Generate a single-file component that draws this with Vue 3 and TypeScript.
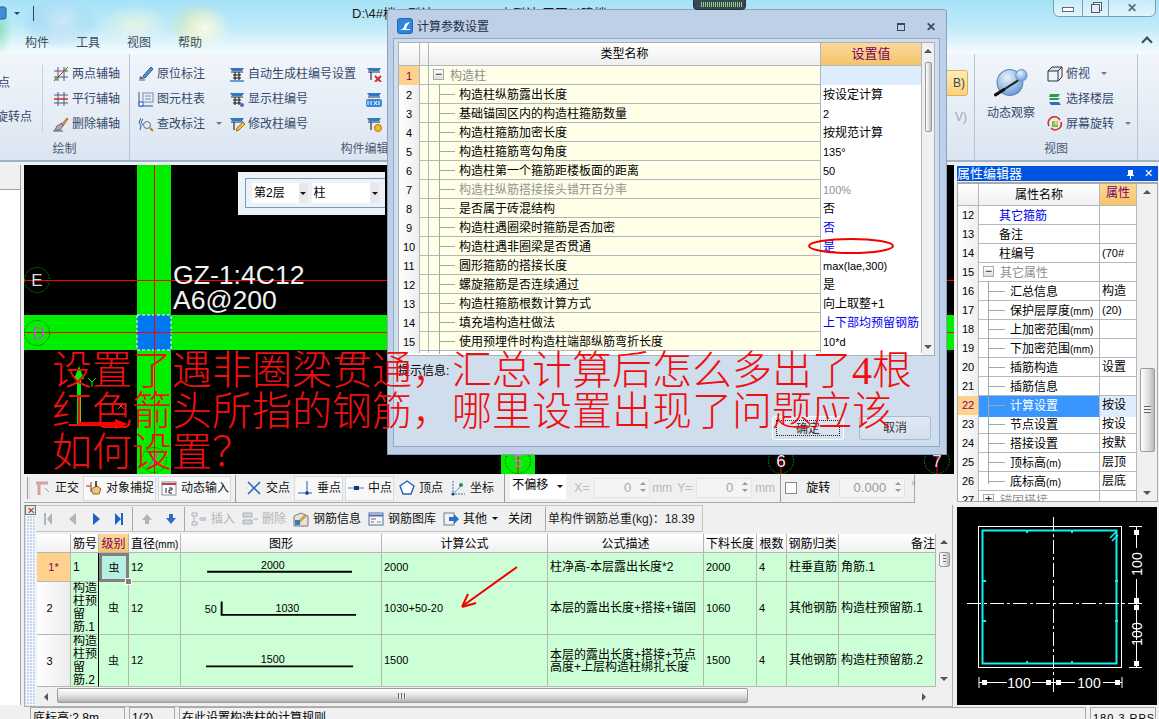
<template>
  <div class="app">
    <header class="top">
      <div class="quick">
        <svg class="qa" viewBox="0 0 8 14"><rect x="-6" y="1" width="12" height="12" rx="2" fill="#3f8fd6" stroke="#245f98" /></svg>
        <i class="caret qa-caret"></i>
        <i class="qa-line"></i>
      </div>
      <div class="doc-title">D:\4#楼 - 型计 100.07/0 - 土型计 三四以建楼</div>
      <div class="tabs">
        <span v-for="t in tabs" :key="t">{{ t }}</span>
      </div>
      <div class="chevron"></div>
      <div class="winbtns">
        <span class="wb wb-min"><i></i></span>
        <span class="wb wb-max"><i></i></span>
        <span class="wb wb-close">✕</span>
      </div>
    </header>

    <section class="ribbon">
      <div class="group g-draw">
        <div class="g-body">
          <div class="cut-col"><div class="cut-a">点</div><div class="cut-b">旋转点</div></div>
          <div class="col col-axis">
            <div v-for="b in axisBtns" :key="b.t" class="rb"><svg viewBox="0 0 16 16" v-html="icons[b.i]"></svg>{{ b.t }}</div>
          </div>
        </div>
        <div class="g-label">绘制</div>
      </div>
      <div class="group g-edit">
        <div class="g-body">
          <div class="col col-a">
            <div v-for="b in editA" :key="b.t" class="rb"><svg viewBox="0 0 16 16" v-html="icons[b.i]"></svg>{{ b.t }}<i v-if="b.c" class="caret"></i></div>
          </div>
          <div class="col col-b">
            <div v-for="b in editB" :key="b.t" class="rb"><svg viewBox="0 0 16 16" v-html="icons[b.i]"></svg>{{ b.t }}</div>
          </div>
          <div class="col">
            <div v-for="b in editC" :key="b" class="rb"><svg viewBox="0 0 16 16" v-html="icons[b]"></svg></div>
          </div>
        </div>
        <div class="g-label">构件编辑</div>
      </div>
      <div class="group g-hidden">
        <div class="hid-col">
          <div class="hid-btn">B)</div>
          <div class="hid-v">V)</div>
        </div>
      </div>
      <div class="group g-view">
        <div class="g-body">
          <div class="orb-col">
            <svg viewBox="0 0 34 30" class="orb">
              <defs>
                <radialGradient id="orbg" cx="0.4" cy="0.3" r="0.8"><stop offset="0" stop-color="#e8f3fd" /><stop offset="1" stop-color="#5b93d0" /></radialGradient>
              </defs>
              <circle cx="16" cy="15" r="12.5" fill="url(#orbg)" stroke="#5a84b4" />
              <circle cx="27" cy="8" r="5.5" fill="url(#orbg)" stroke="#6c96c2" />
              <path d="M2 27 L24 13" stroke="#222" stroke-width="2" />
              <path d="M2 27 L10 22" stroke="#111" stroke-width="3" stroke-linecap="round" />
            </svg>
            <span>动态观察</span>
          </div>
          <div class="col col-view">
            <div v-for="b in viewBtns" :key="b.t" class="rb"><svg viewBox="0 0 16 16" v-html="icons[b.i]"></svg>{{ b.t }}<i v-if="b.c" class="caret"></i></div>
          </div>
        </div>
        <div class="g-label">视图</div>
      </div>
    </section>

    <main class="work">
      <aside class="side"><div class="side-head"></div></aside>

      <div class="center">
        <div class="canvas">
          <svg class="cad" viewBox="24 165 930 309">
            <rect x="137" y="165" width="34" height="309" fill="#00ee00" />
            <rect x="24" y="315" width="930" height="35" fill="#00ee00" />
            <rect x="501" y="454" width="34" height="20" fill="#00ee00" />
            <rect x="137" y="315" width="34" height="35" fill="#0078f0" stroke="#fff" stroke-dasharray="3 2" />
            <path d="M154.5 165V474M24 280.5H954M24 332.5H954M518 454V474M781 454V474M937 454V474" stroke="#ff0000" />
            <g fill="none" stroke="#0a7a0a" stroke-dasharray="2 1">
              <circle cx="37" cy="280" r="12.5" /><circle cx="37" cy="333" r="12.5" />
              <circle cx="154" cy="460" r="12.5" /><circle cx="518" cy="461" r="12.5" />
              <circle cx="781" cy="461" r="12.5" /><circle cx="937" cy="461" r="12.5" />
            </g>
            <g class="axis-t">
              <text x="37" y="286" fill="#ddd">E</text><text x="39" y="339" fill="#b060c0">D</text>
              <text x="154" y="466" fill="#b060c0">X</text><text x="518" y="467" fill="#c080c0">5</text>
              <text x="781" y="467" fill="#eee">6</text><text x="937" y="467" fill="#ddd">7</text>
            </g>
            <text class="gz" x="173" y="284">GZ-1:4C12</text>
            <text class="gz" x="173" y="309">A6@200</text>
            <path d="M79 424V374" stroke="#00ee00" stroke-width="4" />
            <path d="M79 366l-5 13h10z" fill="#00ee00" />
            <path d="M79 424H118" stroke="#ff0000" stroke-width="4" />
            <path d="M128 424l-13-5v10z" fill="#ff0000" />
            <path d="M88 378l4 4 4-4M92 382v5" stroke="#00ee00" fill="none" />
            <path d="M118 403l6 6M124 403l-6 6" stroke="#ff4040" fill="none" />
          </svg>
          <div class="floor">
            <div class="floor-in">
              <div class="combo floor-a">第2层<b><i class="caret dark"></i></b></div>
              <div class="combo floor-b">柱<b><i class="caret dark"></i></b></div>
            </div>
          </div>
        </div>

        <div class="snapbar">
          <i class="grip"></i>
          <div v-for="s in snaps" :key="s.t" class="snap" :class="{ framed: s.f, sep: s.s }"><svg viewBox="0 0 16 16" v-html="icons[s.i]"></svg>{{ s.t }}</div>
          <div class="offset"><span>不偏移</span><i class="caret dark"></i></div>
          <div class="spin-row">
            <span class="lbl-x">X=</span><div class="spin">0<em></em></div><span class="lbl-mm">mm</span>
            <span class="lbl-y">Y=</span><div class="spin">0<em></em></div><span class="lbl-mm2">mm</span>
          </div>
          <label class="rot"><i class="chk"></i><span>旋转</span></label>
          <div class="spin s3">0.000<em></em></div><span class="deg">°</span>
        </div>

        <div class="rebar">
          <div class="handle"><i>✕</i></div>
          <div class="rebar-main">
            <div class="rtools">
              <svg viewBox="0 0 10 14" class="nav"><path d="M1 1h2v12H1zM9 1v12L4 7z" fill="#aeb4bb" /></svg>
              <svg viewBox="0 0 10 14" class="nav n2"><path d="M9 1v12L2 7z" fill="#aeb4bb" /></svg>
              <svg viewBox="0 0 10 14" class="nav n3"><path d="M2 1v12l7-6z" fill="#1d62c8" /></svg>
              <svg viewBox="0 0 10 14" class="nav n4"><path d="M1 1v12l6-6zM7 1h2v12H7z" fill="#1d62c8" /></svg>
              <i class="rsep s1"></i>
              <svg viewBox="0 0 12 12" class="nav n5"><path d="M6 1l5 6H8v4H4V7H1z" fill="#aeb4bb" /></svg>
              <svg viewBox="0 0 12 12" class="nav n6"><path d="M6 11L1 5h3V1h4v4h3z" fill="#2a6cc8" /></svg>
              <i class="rsep s2"></i>
              <div v-for="r in rTools" :key="r.t" class="rtool" :class="{ off: r.off }"><svg viewBox="0 0 16 16" v-html="icons[r.i]"></svg>{{ r.t }}</div>
              <i class="caret dark rcaret"></i>
              <span class="close-t">关闭</span>
              <i class="rsep s3"></i>
              <span class="total">单构件钢筋总重(kg)：18.39</span>
            </div>
            <div class="rgrid-wrap">
              <div class="rgrid">
                <div v-for="(h, i) in rHead" :key="h + i" class="rh" :class="{ act: i === 2, left: i === 1 || i === 3, end: i === 10 }">{{ base(h) }}<small>{{ unit(h) }}</small></div>
                <template v-for="(r, i) in rRows" :key="r.no">
                  <div class="rc-no" :class="{ cur: i === 0 }">{{ i === 0 ? '1*' : r.no }}</div>
                  <div class="rc-tx lab" :class="{ tight: i > 0 }">{{ r.lab }}</div>
                  <div class="rc-lv" :class="{ sel: i === 0 }">虫</div>
                  <div class="rc-tx num">12</div>
                  <div class="rc-shape">
                    <svg v-if="i === 0" viewBox="0 0 201 29"><text x="92" y="17">2000</text><path d="M24 19.5H174" stroke="#000" stroke-width="2" /></svg>
                    <svg v-else-if="i === 1" viewBox="0 0 201 53"><text x="29" y="32">50</text><text x="107" y="31">1030</text><path d="M40 20V33.5H177" stroke="#000" stroke-width="2" fill="none" /></svg>
                    <svg v-else viewBox="0 0 201 52"><text x="92" y="29">1500</text><path d="M24 32H174" stroke="#000" stroke-width="2" /></svg>
                  </div>
                  <div class="rc-tx num">{{ r.calc }}</div>
                  <div class="rc-tx desc">{{ r.desc }}</div>
                  <div class="rc-tx num">{{ r.len }}</div>
                  <div class="rc-tx num">4</div>
                  <div class="rc-tx">{{ r.kind }}</div>
                  <div class="rc-tx">{{ r.note }}</div>
                </template>
              </div>
              <div class="vs rvs"><i class="up"></i><b class="thumb"></b><i class="down"></i></div>
            </div>
            <div class="hs">
              <i class="hl"></i><b class="hthumb"></b><i class="hr"></i>
            </div>
          </div>
        </div>
      </div>

      <aside class="right">
        <div class="prop-title"><span>属性编辑器</span>
          <svg class="pin" viewBox="0 0 9 10"><path d="M2 1h5v5h1v1H5v3H4V7H1V6h1z" fill="#fff" /></svg>
          <u>✕</u>
        </div>
        <div class="prop">
          <div class="prop-table">
            <div class="prow head"><div></div><div class="pname-h">属性名称</div><div class="pval-h">属性</div></div>
            <div v-for="p in props" :key="p.n" class="prow" :class="{ picked: p.n === 22 }">
              <div class="pno">{{ p.n }}</div>
              <div class="pname" :class="p.c">{{ base(p.t) }}<small>{{ unit(p.t) }}</small></div>
              <div class="pval" :class="latin(p.v)">{{ p.v }}</div>
            </div>
          </div>
          <div class="vs pvs"><i class="up"></i><b class="thumb"></b><i class="down"></i></div>
        </div>
        <svg class="section" viewBox="957 507 200 198">
          <rect x="957" y="507" width="200" height="198" fill="#000" />
          <rect x="978.5" y="526.5" width="143" height="141" fill="none" stroke="#fff" />
          <rect x="982.5" y="530.5" width="134" height="133" fill="none" stroke="#10f0f0" stroke-width="2" />
          <path d="M1110 538l6-6M1112 541l6-6" stroke="#10f0f0" stroke-width="1.6" />
          <path d="M1027 530v3M1072 530v3M1027 661v3M1072 661v3M983 581h3M1115 581h3M983 621h3M1115 621h3" stroke="#10f0f0" stroke-width="2" />
          <path d="M1053.5 517V693M967 603.5H1144" stroke="#fff" stroke-dasharray="14 3 3 3" />
          <path d="M1129 526.5H1142M1129 667.5H1142M1136.5 526V548M1136.5 579V640M1136.5 642V667M979 677V688M1122 677V688M979 682.5H1007M1032 682.5H1075M1103 682.5H1122" stroke="#fff" />
          <path d="M1134 530h5v5h-5zM1134 598h5v5h-5zM1134 605h5v5h-5zM1134 661h5v5h-5zM982 680h5v5h-5zM1046 680h5v5h-5zM1056 680h5v5h-5zM1115 680h5v5h-5z" fill="#fff" />
          <text class="dim-t" x="1019" y="688">100</text>
          <text class="dim-t" x="1089" y="688">100</text>
          <text class="dim-t" transform="translate(1142 564) rotate(-90)">100</text>
          <text class="dim-t" transform="translate(1142 634) rotate(-90)">100</text>
        </svg>
      </aside>
    </main>

    <footer class="status">
      <span class="st st0"></span>
      <span class="st st1">底标高:2.8m</span>
      <span class="st st2">1(2)</span>
      <span class="st st3">在此设置构造柱的计算规则</span>
      <span class="st st4">180.3 RPS</span>
    </footer>

    <!-- 浮动对话框 -->
    <section class="dialog">
      <div class="dlg-title">
        <svg viewBox="0 0 16 16" class="dlg-ico"><rect x="0.5" y="0.5" width="15" height="15" rx="2.5" fill="#2f86dc" stroke="#1d68b8" /><path d="M3 12c3-1 4-2 5-6 2-1 3-2 5-2l-3 4-1 3h4v1z" fill="#fff" /></svg>
        <span>计算参数设置</span>
        <i class="dlg-max"></i>
        <i class="dlg-x">✕</i>
      </div>
      <div class="dlg-frame">
        <div class="pgrid">
          <div class="pg-table">
            <div class="grow ghead"><div></div><div></div><div class="gn-h">类型名称</div><div class="gv-h">设置值</div></div>
            <div v-for="(r, i) in params" :key="i" class="grow" :class="{ rootrow: i === 0, faded: r.dim }">
              <div class="gno">{{ i + 1 }}</div>
              <div class="gsp"></div>
              <div class="gname" :class="i === 0 ? 'root' : 'leaf'">{{ r.t }}</div>
              <div class="gval" :class="[r.blue ? 'blue' : '', latin(r.v)]">{{ r.v }}</div>
            </div>
          </div>
          <div class="vs gvs"><i class="up"></i><b class="thumb"></b><i class="down"></i></div>
        </div>
        <div class="hint">提示信息:</div>
        <div class="dlg-btns">
          <button class="ok"><span>确定</span></button>
          <button>取消</button>
        </div>
      </div>
    </section>

    <div class="meter"><i></i></div>

    <!-- 图上批注 -->
    <svg class="marks" viewBox="0 0 1159 719">
      <ellipse cx="851" cy="246" rx="42" ry="7" fill="none" stroke="#f00000" stroke-width="2" />
      <path d="M517 567L464 605" stroke="#f00000" stroke-width="2" />
      <path d="M462 607l14-4M462 607l6-13" stroke="#f00000" stroke-width="2" fill="none" />
    </svg>
    <div class="note">
      <div v-for="l in noteLines" :key="l">{{ l }}</div>
    </div>
  </div>
</template>

<script setup lang="ts">
interface Btn { t: string; i: string; c?: boolean }

const tabs = ['构件', '工具', '视图', '帮助']

const noteLines = [
  '设置了遇非圈梁贯通，汇总计算后怎么多出了4根',
  '红色箭头所指的钢筋，哪里设置出现了问题应该',
  '如何设置？',
]

const head = `<path d="M1 2h14l-2 3H3z" fill="#2e78c8"/><path d="M2 6h12" stroke="#234"/>`

const icons: Record<string, string> = {
  two: `<path d="M5 1v14M11 1v14M1 5h14M1 11h14" stroke="#4a5a78"/><path d="M1 15L15 1" stroke="#e02020"/><circle cx="3" cy="13" r="1.6" fill="#6a9a30"/><circle cx="12" cy="4" r="1.6" fill="#6a9a30"/>`,
  par: `<path d="M5 1v14M11 1v14M1 4h14M1 12h14" stroke="#4a5a78"/><path d="M1 8h14" stroke="#d02020" stroke-width="1.4"/>`,
  del: `<path d="M9 8l5-6 1 1-5 7z" fill="#e8a858" stroke="#a86820"/><path d="M4 10l5-3 1 3-3 4H2z" fill="#b8a0d0" stroke="#765"/><path d="M0 15h10" stroke="#456"/>`,
  pen: `<path d="M5 10L13 1l2 2-8 9z" fill="#5c8ed0" stroke="#2a5a9a"/><path d="M1 15l1-5 5 2z" fill="#5a7088"/><path d="M1 13h6v2H1z" fill="#9ab"/>`,
  tab: `<path d="M1 1v14h14" fill="none" stroke="#2458a8"/><rect x="1" y="11" width="4" height="4" fill="#fff" stroke="#2458a8"/><rect x="5" y="2" width="10" height="9" fill="#e8eef6" stroke="#7a8ca8"/><path d="M7 5h6M7 8h6" stroke="#7a8ca8"/>`,
  find: `<path d="M3 2l-2 4 2 4-1 4M5 3l-2 3 2 3" fill="none" stroke="#2a5ab0"/><circle cx="9" cy="9" r="3.5" fill="#dfe8f0" stroke="#678"/><path d="M12 12l3 3" stroke="#b08030" stroke-width="2"/>`,
  auto: `${head}<path d="M6 6v8M10 6v8M4 9h8M4 12h8" stroke="#111"/><path d="M1 15h14" stroke="#2e78c8" stroke-width="1.4"/>`,
  show: `${head}<path d="M6 6v8M10 6v8M4 9h8M4 12h8" stroke="#111"/><circle cx="13" cy="14" r="2" fill="#4a6ab0"/>`,
  edit: `${head}<path d="M5 6v8" stroke="#111"/><path d="M7 15l1-3 6-6 2 2-6 6z" fill="#f0c040" stroke="#a07018"/>`,
  cdel: `${head}<path d="M5 6v8" stroke="#111"/><path d="M9 10l6 6M15 10l-6 6" stroke="#d03030" stroke-width="2"/>`,
  dxf: `${head}<rect x="0" y="8" width="16" height="8" rx="2" fill="#3a88d8"/><path d="M2 10v4M5 10v4M8 10l3 4M11 10l-3 4M13 10v4" stroke="#fff"/>`,
  cset: `${head}<path d="M5 6v8" stroke="#111"/><circle cx="12" cy="12" r="3.5" fill="#f2b830" stroke="#b07a10"/>`,
  top: `<path d="M5 1h10l-4 4H1z" fill="#cfe4f8"/><path d="M1 5h10v10H1zM1 5l4-4h10l-4 4M11 15l4-4V1" fill="none" stroke="#333"/>`,
  floor: `<path d="M3 3h10l-2 3H2zM3 7h10l-2 2H2z" fill="#2f9a50"/><path d="M2 11h10l2 3H4z" fill="#2e6cc0"/>`,
  rot: `<path d="M2 10a6 6 0 0 1 11-6" fill="none" stroke="#d83030" stroke-width="1.6"/><path d="M14 6a6 6 0 0 1-10 6" fill="none" stroke="#d83030" stroke-width="1.6"/><rect x="5" y="5" width="6" height="6" fill="#7ac050"/><circle cx="9" cy="7" r="2" fill="#f0d040"/>`,
  ortho: `<path d="M1 3h12M4 3v12" stroke="#d8a0a0" stroke-width="3"/><path d="M10 8l4 4" stroke="#99a" />`,
  snap: `<path d="M0 6h5M5 2v10" stroke="#a03030"/><path d="M5 9l6-3 4 3-2 5H7z" fill="#e8c878" stroke="#8a6a20"/><path d="M10 1v6" stroke="#553" stroke-width="2"/>`,
  input: `<rect x="1" y="2" width="14" height="13" fill="#fff" stroke="#889"/><path d="M1 4h14" stroke="#c04040" stroke-width="2"/><path d="M5 8v5M8 8h3v2H8v3h3" stroke="#222" fill="none"/>`,
  cross: `<path d="M2 2l12 12M14 2L2 14" stroke="#1f62b8" stroke-width="1.5"/>`,
  perp: `<path d="M1 13h14M10 1v14" stroke="#1f62b8"/><rect x="8.5" y="11.5" width="3" height="3" fill="#123a80"/>`,
  mid: `<path d="M0 8h16" stroke="#4a80c8"/><rect x="6" y="6" width="5" height="4" fill="#123a80"/>`,
  vert: `<path d="M8 1l7 5-3 8H4L1 6z" fill="#fff" stroke="#1f62b8" stroke-width="1.4"/>`,
  coord: `<path d="M3 1v13h12M3 14l8-8" stroke="#2a70c0" stroke-dasharray="2 1" fill="none"/><circle cx="11" cy="5" r="2" fill="#2a8a60"/><circle cx="3" cy="14" r="1.6" fill="#123a80"/>`,
  ins: `<path d="M1 2h5v3H1zM1 11h5v3H1zM3 5v6M8 8h7" stroke="#aab0b8" fill="none"/><rect x="9" y="6" width="6" height="4" fill="#c8ccd2"/>`,
  rem: `<path d="M1 2h9v4H1zM1 9h9v4H1z" fill="#d4d8dc" stroke="#aab0b8"/><path d="M11 8h5" stroke="#aab0b8"/>`,
  info: `<path d="M8 2l7 3v10H1V5z" fill="#e8e4d0" stroke="#778"/><path d="M3 12l9-9 2 2-9 9z" fill="#c8a050"/><rect x="2" y="9" width="5" height="5" fill="#3a78c0"/>`,
  lib: `<rect x="1" y="2" width="14" height="12" fill="#f8f8fa" stroke="#4a70b0"/><path d="M1 4.5h14" stroke="#4a70b0" stroke-width="2"/><path d="M3 8h5M3 11h3" stroke="#a05050"/><path d="M9 11h4" stroke="#50a050"/>`,
  other: `<rect x="1" y="2" width="10" height="12" fill="#eef2f6" stroke="#778"/><path d="M6 6h5V3l5 5-5 5v-3H6z" fill="#2a70d0"/>`,
}

const axisBtns: Btn[] = [
  { t: '两点辅轴', i: 'two' },
  { t: '平行辅轴', i: 'par' },
  { t: '删除辅轴', i: 'del' },
]
const editA: Btn[] = [
  { t: '原位标注', i: 'pen' },
  { t: '图元柱表', i: 'tab' },
  { t: '查改标注', i: 'find', c: true },
]
const editB: Btn[] = [
  { t: '自动生成柱编号设置', i: 'auto' },
  { t: '显示柱编号', i: 'show' },
  { t: '修改柱编号', i: 'edit' },
]
const editC = ['cdel', 'dxf', 'cset']
const viewBtns: Btn[] = [
  { t: '俯视', i: 'top', c: true },
  { t: '选择楼层', i: 'floor' },
  { t: '屏幕旋转', i: 'rot', c: true },
]

const snaps = [
  { t: '正交', i: 'ortho' },
  { t: '对象捕捉', i: 'snap', f: true },
  { t: '动态输入', i: 'input', f: true, s: true },
  { t: '交点', i: 'cross' },
  { t: '垂点', i: 'perp', f: true },
  { t: '中点', i: 'mid', f: true },
  { t: '顶点', i: 'vert' },
  { t: '坐标', i: 'coord' },
]

const rTools = [
  { t: '插入', i: 'ins', off: true },
  { t: '删除', i: 'rem', off: true },
  { t: '钢筋信息', i: 'info' },
  { t: '钢筋图库', i: 'lib' },
  { t: '其他', i: 'other' },
]

const rHead = ['', '筋号', '级别', '直径(mm)', '图形', '计算公式', '公式描述', '下料长度', '根数', '钢筋归类', '备注']
const rRows = [
  { no: '1', lab: '1', calc: '2000', desc: '柱净高-本层露出长度*2', len: '2000', kind: '柱垂直筋', note: '角筋.1' },
  { no: '2', lab: '构造柱预留筋.1', calc: '1030+50-20', desc: '本层的露出长度+搭接+锚固', len: '1060', kind: '其他钢筋', note: '构造柱预留筋.1' },
  { no: '3', lab: '构造柱预留筋.2', calc: '1500', desc: '本层的露出长度+搭接+节点高度+上层构造柱绑扎长度', len: '1500', kind: '其他钢筋', note: '构造柱预留筋.2' },
]

const params = [
  { t: '构造柱', v: '' },
  { t: '构造柱纵筋露出长度', v: '按设定计算' },
  { t: '基础锚固区内的构造柱箍筋数量', v: '2' },
  { t: '构造柱箍筋加密长度', v: '按规范计算' },
  { t: '构造柱箍筋弯勾角度', v: '135°' },
  { t: '构造柱第一个箍筋距楼板面的距离', v: '50' },
  { t: '构造柱纵筋搭接接头错开百分率', v: '100%', dim: true },
  { t: '是否属于砖混结构', v: '否' },
  { t: '构造柱遇圈梁时箍筋是否加密', v: '否', blue: true },
  { t: '构造柱遇非圈梁是否贯通', v: '是', blue: true },
  { t: '圆形箍筋的搭接长度', v: 'max(lae,300)' },
  { t: '螺旋箍筋是否连续通过', v: '是' },
  { t: '构造柱箍筋根数计算方式', v: '向上取整+1' },
  { t: '填充墙构造柱做法', v: '上下部均预留钢筋', blue: true },
  { t: '使用预埋件时构造柱端部纵筋弯折长度', v: '10*d' },
]

const props = [
  { n: 12, t: '其它箍筋', v: '', c: 'p0 bl' },
  { n: 13, t: '备注', v: '', c: 'p0' },
  { n: 14, t: '柱编号', v: '(70#', c: 'p0' },
  { n: 15, t: '其它属性', v: '', c: 'pg' },
  { n: 16, t: '汇总信息', v: '构造', c: 'p1' },
  { n: 17, t: '保护层厚度(mm)', v: '(20)', c: 'p1' },
  { n: 18, t: '上加密范围(mm)', v: '', c: 'p1' },
  { n: 19, t: '下加密范围(mm)', v: '', c: 'p1' },
  { n: 20, t: '插筋构造', v: '设置', c: 'p1' },
  { n: 21, t: '插筋信息', v: '', c: 'p1' },
  { n: 22, t: '计算设置', v: '按设', c: 'p1' },
  { n: 23, t: '节点设置', v: '按设', c: 'p1' },
  { n: 24, t: '搭接设置', v: '按默', c: 'p1' },
  { n: 25, t: '顶标高(m)', v: '层顶', c: 'p1' },
  { n: 26, t: '底标高(m)', v: '层底', c: 'p1 last' },
  { n: 27, t: '锚固搭接', v: '', c: 'pg plus' },
]

// 纯拉丁字符的单元格用窄一号的字，接近原程序的点阵字宽
function latin(v: string) {
  return v && /^[\x00-\x7f°]+$/.test(v) ? 'num' : ''
}

// 单位 (mm)/(m) 在原程序里是小一号的窄字
const unit = (s: string) => s.match(/\(m+\)$/)?.[0] ?? ''
const base = (s: string) => s.replace(/\(m+\)$/, '')
</script>

<style>
html, body { margin: 0; overflow: hidden; background: #f0f0f0; }
</style>

<style scoped>
.app {
  position: relative;
  width: 1159px;
  height: 719px;
  overflow: hidden;
  display: flex;
  flex-direction: column;
  background: #f0f0f0;
  font: 12px/16px "Liberation Sans", "Noto Sans CJK SC", sans-serif;
  color: #000;
}
i, em, u { font-style: normal; text-decoration: none; }
small { font-size: 10px; }
.caret {
  display: inline-block;
  width: 0;
  height: 0;
  border: 3px solid transparent;
  border-top: 3px solid #6a7a8c;
  border-bottom: 0;
}
.caret.dark { border-top-color: #111; }

.top {
  position: relative;
  height: 54px;
  flex: none;
  background:
    radial-gradient(ellipse 28px 24px at 62px 22px, rgba(255,255,255,.55), transparent),
    radial-gradient(ellipse 40px 26px at 60px 24px, rgba(90,170,230,.45), transparent),
    radial-gradient(ellipse 36px 20px at 135px 24px, rgba(255,250,220,.6), transparent),
    radial-gradient(ellipse 26px 22px at 205px 28px, rgba(255,255,255,.8), transparent),
    radial-gradient(ellipse 30px 24px at 198px 26px, rgba(220,230,130,.7), transparent),
    radial-gradient(ellipse 12px 26px at 0 30px, rgba(120,220,170,.7), transparent),
    linear-gradient(#a6e2f7 0, #bdeaf8 26px, #e6f7fc 46px, #f6fbfd 54px);
}
.quick { position: absolute; left: 0; top: 6px; height: 15px; width: 40px; }
.qa { position: absolute; left: 0; top: 0; width: 8px; height: 14px; }
.qa-caret { position: absolute; left: 14px; top: 6px; border-top-color: #345; }
.qa-line { position: absolute; left: 33px; top: 0; width: 1px; height: 15px; background: #345; }
.doc-title { position: absolute; left: 352px; top: 6px; white-space: pre; font-size: 13px; color: #1a1a1a; }
.tabs { position: absolute; left: 25px; top: 35px; display: flex; gap: 27px; color: #3c4c5e; }
.chevron {
  position: absolute; left: 1143px; top: 38px; width: 6px; height: 6px;
  border: solid #445; border-width: 2px 0 0 2px; transform: rotate(45deg);
}
.winbtns {
  position: absolute; left: 1053px; top: -1px; width: 103px; height: 18px;
  display: flex; box-sizing: border-box;
  border: 1px solid #7e9cb4; border-radius: 0 0 6px 6px;
  background: linear-gradient(rgba(255,255,255,.35), rgba(255,255,255,.6));
}
.wb { display: flex; align-items: center; justify-content: center; border-right: 1px solid #7e9cb4; color: #5b6b7a; }
.wb-min { width: 28px; }
.wb-min i { width: 10px; height: 3px; border: 1px solid #667; background: #fff; margin-top: 3px; }
.wb-max { width: 25px; }
.wb-max i { width: 7px; height: 7px; border: 1px solid #556; box-shadow: 2px -2px 0 -1px #fff, 2px -2px 0 0 #556; background: #dfeef6; }
.wb-close { flex: 1; border: 0; font-size: 12px; font-weight: 700; }

.ribbon {
  height: 108px;
  flex: none;
  box-sizing: border-box;
  display: flex;
  background: linear-gradient(#f2f6fb, #dbe5f1);
  border-bottom: 2px solid #9eb2c8;
  color: #34496a;
}
.group { position: relative; box-sizing: border-box; border-right: 1px solid #b4c4d6; display: flex; flex-direction: column; }
.g-body { height: 82px; padding-top: 7px; box-sizing: border-box; display: flex; }
.g-label { text-align: center; line-height: 16px; margin-top: 5px; color: #4a5c74; }
.g-draw { width: 130px; }
.cut-col { position: relative; width: 52px; flex: none; }
.cut-col::after { content: ""; position: absolute; left: 42px; top: 4px; height: 67px; width: 1px; background: #c6d2e0; }
.cut-a { margin: 14px 0 0 -2px; }
.cut-b { margin: 18px 0 0 -4px; white-space: nowrap; }
.col { display: flex; flex-direction: column; flex: none; }
.rb { height: 25px; display: flex; align-items: center; gap: 3px; white-space: nowrap; }
.rb svg { width: 16px; height: 16px; flex: none; }
.rb .caret { margin-left: 8px; }
.col-axis { margin-left: 1px; }
.g-edit { width: 470px; }
.g-edit .g-body { padding-left: 8px; }
.col-a { width: 91px; }
.col-b { width: 137px; }
.g-hidden { width: 375px; align-items: flex-end; padding-right: 6px; }
.hid-col { display: flex; flex-direction: column; align-items: flex-end; }
.hid-btn {
  margin-top: 16px; width: 30px; height: 26px; box-sizing: border-box; text-align: right; padding-right: 2px;
  line-height: 24px; color: #445; border: 1px solid #e0b050; border-radius: 3px;
  background: linear-gradient(#fdeeb4, #fbd27a);
}
.hid-v { margin-top: 13px; color: #a0a8b0; padding-right: 1px; }
.g-view { width: 163px; }
.orb-col { width: 72px; flex: none; display: flex; flex-direction: column; align-items: center; }
.orb { width: 36px; height: 31px; margin-top: 6px; }
.orb-col span { margin-top: 7px; }

.work { flex: 1; display: flex; min-height: 0; padding-top: 3px; box-sizing: border-box; }
.side { width: 20px; flex: none; background: #fff; border-right: 1px solid #a0a0a0; margin-right: 3px; height: 540px; }
.side-head { height: 24px; background: #f0f0f0; border-bottom: 1px solid #a0a0a0; }
.center { width: 930px; flex: none; display: flex; flex-direction: column; }

.canvas { position: relative; height: 309px; flex: none; background: #000; }
.cad { position: absolute; inset: 0; width: 100%; height: 100%; }
.axis-t text { font: 17px "Liberation Sans", sans-serif; text-anchor: middle; }
.gz { font: 26.6px "Liberation Sans", sans-serif; fill: #f2f2f2; }
.floor {
  position: absolute; left: 214px; top: 7px; width: 147px; height: 43px;
  padding: 6px 0 7px 7px; box-sizing: border-box; background: #edf2f9;
}
.floor-in {
  height: 30px; box-sizing: border-box; border: 1px solid #7e98b4; border-right: 0;
  display: flex; gap: 4px; padding: 4px 6px;
}
.combo { position: relative; height: 20px; box-sizing: border-box; background: #fff; line-height: 20px; padding-left: 2px; }
.combo b { position: absolute; right: 0; top: 0; width: 9px; height: 20px; background: #e6e8ec; display: flex; align-items: center; justify-content: center; }
.floor-a { width: 56px; }
.floor-b { width: 68px; }

.snapbar {
  position: relative; height: 29px; flex: none; box-sizing: border-box; width: 891px;
  display: flex; align-items: center; padding-left: 8px;
  background: #f0f0f0; border-bottom: 1px solid #a8a8a8; border-right: 1px solid #a8a8a8;
}
.grip { position: absolute; left: 3px; top: 3px; height: 22px; width: 1px; background: #999; box-shadow: 2px 0 0 #ddd; }
.snap { height: 25px; display: flex; align-items: center; gap: 4px; padding: 0 2px 0 3px; white-space: nowrap; color: #111; box-sizing: border-box; margin-right: 2px; }
.snap svg { width: 16px; height: 16px; flex: none; }
.snap.framed { background: #f8f8f8; box-shadow: inset 0 0 0 1px #d8d8d8; }
.snap.sep { margin-right: 12px; position: relative; }
.snap.sep::after { content: ""; position: absolute; right: -5px; top: -1px; height: 28px; width: 1px; background: #9a9a9a; }
.offset {
  margin-left: 12px; width: 56px; height: 24px; flex: none; box-sizing: border-box; position: relative;
  background: #fff; padding-left: 2px; line-height: 20px; margin-top: -3px;
}
.offset::before { content: ""; position: absolute; left: -6px; top: -1px; height: 28px; width: 1px; background: #9a9a9a; }
.offset .caret { position: absolute; right: 3px; top: 10px; }
.spin-row { display: flex; align-items: center; margin-left: 8px; color: #b8b8b8; white-space: nowrap; flex: none; }
.lbl-x { width: 20px; }
.lbl-y { width: 19px; }
.lbl-mm { width: 27px; padding-left: 2px; box-sizing: border-box; }
.lbl-mm2 { width: 28px; padding-left: 3px; box-sizing: border-box; }
.spin {
  position: relative; width: 56px; height: 20px; box-sizing: border-box; flex: none;
  border: 1px solid #e4e4e4; background: #f4f4f4; text-align: right; padding-right: 18px;
  line-height: 18px; color: #a8a8a8; font-size: 13px;
}
.spin em { position: absolute; right: 3px; top: 3px; width: 0; height: 0; border: 3px solid transparent; border-bottom-color: #999; border-top: 0; }
.spin em::after { content: ""; position: absolute; left: -3px; top: 7px; border: 3px solid transparent; border-top-color: #999; border-bottom: 0; }
.rot { display: flex; align-items: center; flex: none; white-space: nowrap; }
.rot::before { content: ""; width: 1px; height: 28px; background: #9a9a9a; margin-right: 4px; }
.chk { width: 12px; height: 12px; box-sizing: border-box; background: #fff; border: 1px solid #8a8a8a; margin-right: 9px; flex: none; }
.s3 { width: 66px; margin-left: 9px; color: #999; }
.deg { margin-left: 6px; color: #999; margin-top: -5px; }

.rebar { flex: none; height: 202px; margin-top: 2px; display: flex; width: 929px; box-sizing: border-box; border-right: 1px solid #b0b0b0; border-bottom: 1px solid #b0b0b0; }
.handle {
  width: 12px; flex: none; box-sizing: border-box; border-left: 1px solid #b0b0b0;
  background: #c4d6ee radial-gradient(#f4f8fd 1px, transparent 1.2px) 0 0 / 3px 3px;
}
.handle i { display: block; height: 10px; line-height: 10px; font-size: 10px; text-align: center; background: #e8e8e8; color: #a03030; border: 1px solid #777; box-sizing: border-box; }
.rebar-main { flex: 1; min-width: 0; display: flex; flex-direction: column; }
.rtools {
  position: relative; width: 667px; height: 27px; flex: none; box-sizing: border-box; display: flex; align-items: center;
  background: #f0f0f0; border: 1px solid #c4c4c4; border-left: 0;
}
.nav { position: absolute; width: 10px; height: 14px; left: 7px; top: 6px; }
.n2 { left: 31px; }
.n3 { left: 55px; }
.n4 { left: 78px; }
.n5 { left: 105px; width: 12px; height: 12px; top: 7px; }
.n6 { left: 129px; width: 12px; height: 12px; top: 7px; }
.rsep { position: absolute; top: 1px; height: 24px; width: 1px; background: #a8a8a8; }
.rsep.s1 { left: 96px; }
.rsep.s2 { left: 148px; }
.rsep.s3 { left: 500px; }
.rtool { display: flex; align-items: center; gap: 4px; white-space: nowrap; margin-right: 7px; color: #111; height: 25px; }
.rtool:first-of-type { margin-left: 155px; }
.rtool svg { width: 16px; height: 16px; flex: none; }
.rtool.off { color: #b4b4b4; }
.rcaret { margin-left: -2px; }
.close-t { margin-left: 10px; }
.total { position: absolute; left: 512px; color: #222; white-space: nowrap; }

.rgrid-wrap { display: flex; margin: 2px 0 0 1px; height: 153px; flex: none; }
.rgrid {
  display: grid; width: 899px; flex: none;
  grid-template-columns: 34px 28px 30px 52px 201px 166px 156px 53px 30px 52px 97px;
  grid-template-rows: 19px 29px 53px 52px;
  background: #ccffd5;
}
.rgrid > div { box-sizing: border-box; border-right: 1px solid #b4b8b4; border-bottom: 1px solid #b4b8b4; overflow: hidden; }
.rh { background: linear-gradient(#fff, #f1f1f1); text-align: center; line-height: 21px; white-space: nowrap; }
.rh.left { text-align: left; padding-left: 2px; }
.rh.end { text-align: right; padding-right: 0; }
.rh.act { background: linear-gradient(#fcd89a, #f4c468); color: #7a0060; }
.rc-no { background: linear-gradient(90deg, #fff, #ececec); display: flex; align-items: center; justify-content: center; font-size: 11px; padding-right: 8px; }
.rc-no.cur { background: #fed28c; color: #800060; padding-right: 0; }
.rc-tx { display: flex; align-items: center; padding-left: 2px; line-height: 13px; }
.rc-tx.num { font-size: 11px; }
.rc-tx.lab { border-right: 1px solid #000 !important; }
.rc-tx.tight { word-break: break-all; line-height: 13px; }
.rc-tx.desc { padding-right: 3px; line-height: 12px; }
.rc-lv { display: flex; align-items: center; justify-content: center; font-size: 11px; }
.rc-lv.sel { position: relative; z-index: 1; background: #b8f0e0; border: 3px solid #808080 !important; overflow: visible !important; }
.rc-lv.sel::after { content: ""; position: absolute; right: -6px; bottom: -6px; width: 5px; height: 5px; background: #808080; border: 1px solid #fff; }
.rc-shape svg { display: block; width: 100%; height: 100%; }
.rc-shape text { font: 11px "Liberation Sans", sans-serif; text-anchor: middle; }

.vs { position: relative; background: #f0f0f0; flex: none; }
.vs .up, .vs .down { position: absolute; left: 50%; margin-left: -4px; width: 0; height: 0; border: 4px solid transparent; }
.vs .up { top: 6px; border-bottom-color: #555; border-top: 0; }
.vs .down { bottom: 6px; border-top-color: #555; border-bottom: 0; }
.vs .thumb {
  position: absolute; left: 3px; right: 2px; box-sizing: border-box; border: 1px solid #9a9a9a; border-radius: 2px;
  background: linear-gradient(90deg, #fff, #e0e0e0 55%, #b8b8b8);
}
.vs .thumb::after { content: ""; position: absolute; left: 3px; right: 3px; top: 50%; margin-top: -4px; height: 7px; background: repeating-linear-gradient(#666 0 1px, #eee 1px 3px); }
.rvs { width: 16px; }
.rvs .thumb { top: 18px; height: 15px; }
.rvs .thumb::after { margin-top: -5px; height: 8px; }
.hs { position: relative; height: 18px; margin: 1px 0 0 1px; background: #f0f0f0; }
.hs .hl, .hs .hr { position: absolute; top: 5px; width: 0; height: 0; border: 4px solid transparent; }
.hs .hl { left: 7px; border-right-color: #555; border-left: 0; }
.hs .hr { right: 26px; border-left-color: #555; border-right: 0; }
.hthumb {
  position: absolute; left: 20px; width: 691px; top: 0; height: 15px; box-sizing: border-box; border: 1px solid #9a9a9a; border-radius: 2px;
  background: linear-gradient(#fff, #e0e0e0 55%, #b0b0b0);
}
.hthumb::after { content: ""; position: absolute; left: 340px; top: 4px; width: 8px; height: 6px; background: repeating-linear-gradient(90deg, #666 0 1px, #eee 1px 3px); }

.right { width: 201px; margin-left: 3px; flex: none; padding-top: 1px; box-sizing: border-box; }
.prop-title { height: 15px; background: #0055e0; color: #fff; font-size: 13px; line-height: 15px; position: relative; }
.pin { position: absolute; left: 169px; top: 3px; width: 9px; height: 10px; }
.prop-title u { position: absolute; left: 187px; top: 0; font-size: 11px; }
.prop { display: flex; height: 320px; margin-top: 1px; background: #fff; border: 1px solid #a8a8a8; border-top-width: 2px; box-sizing: border-box; overflow: hidden; }
.prop-table { width: 179px; flex: none; overflow: hidden; }
.prow { display: grid; grid-template-columns: 21px 121px 37px; height: 19px; box-sizing: border-box; border-bottom: 1px solid #b4b8bc; }
.prow > div { border-right: 1px solid #b4b8bc; box-sizing: border-box; overflow: hidden; white-space: nowrap; line-height: 21px; }
.prow.head { height: 22px; background: linear-gradient(#fff, #f0f0f0); }
.pname-h { text-align: center; line-height: 22px !important; }
.pval-h { text-align: center; background: linear-gradient(#fcd89a, #f4c468); color: #7a0060; line-height: 18px !important; }
.pno { background: linear-gradient(90deg, #fff, #eee); text-align: center; font-size: 11px; line-height: 19px !important; }
.pname { position: relative; overflow: visible !important; }
.p0 { padding-left: 20px; }
.bl { color: #0000e8; }
.pg { padding-left: 21px; color: #909090; }
.pg::before {
  content: "−"; position: absolute; left: 4px; top: 3px; width: 11px; height: 11px; line-height: 9px; text-align: center;
  border: 1px solid #aaa; background: linear-gradient(#fff, #ddd); color: #222; box-sizing: border-box;
}
.plus::before { content: "+"; }
.p1 { padding-left: 31px; }
.p1::before { content: ""; position: absolute; left: 9px; top: -1px; bottom: -1px; width: 1px; background: #9aa; }
.p1::after { content: ""; position: absolute; left: 9px; top: 9px; width: 17px; height: 1px; background: #9aa; }
.p1.last::before { bottom: 9px; }
.prow.picked .pno { background: #fed28c; color: #800060; }
.prow.picked .pname { background: #3a96ff; color: #fff; }
.prow.picked .pval { background: #deedfd; }
.pval { padding-left: 2px; line-height: 18px !important; }
.pval.num { font-size: 11px; }
.pvs { flex: 1; }
.pvs .thumb { top: 184px; height: 84px; }
.section { display: block; width: 200px; height: 198px; margin-top: 5px; }
.dim-t { font: 14px "Liberation Sans", sans-serif; fill: #fff; text-anchor: middle; }

.status { height: 12px; flex: none; display: flex; gap: 4px; overflow: hidden; background: #f0f0f0; }
.st { box-sizing: border-box; height: 20px; border: 1px solid #a8a8a8; border-bottom: 0; padding: 2px 0 0 2px; white-space: nowrap; }
.st0 { width: 26px; border: 0; }
.st1 { width: 95px; }
.st2 { width: 46px; }
.st3 { width: 907px; }
.st4 { width: 66px; font-size: 11px; letter-spacing: 1px; }

.dialog {
  position: absolute; left: 387px; top: 9px; width: 560px; height: 446px; box-sizing: border-box;
  background: #bdd0e8; border: 1px solid #8aa2bc; border-radius: 3px 3px 0 0; padding: 28px 6px 7px 5px;
}
.dlg-title { position: absolute; left: 0; top: 0; right: 0; height: 28px; }
.dlg-ico { position: absolute; left: 9px; top: 8px; width: 16px; height: 16px; }
.dlg-title span { position: absolute; left: 29px; top: 9px; color: #1e2c44; }
.dlg-max { position: absolute; left: 509px; top: 13px; width: 8px; height: 8px; box-sizing: border-box; border: 1px solid #445; border-top-width: 2px; }
.dlg-x { position: absolute; left: 538px; top: 9px; color: #445; font-weight: 700; font-size: 12px; }
.dlg-frame {
  position: relative; height: 100%; box-sizing: border-box; background: #cfdded; border: 1px solid #8fa9c4; padding: 3px 4px;
}
.pgrid { display: flex; height: 314px; background: #fff; border: 1px solid #a8b0b8; box-sizing: border-box; overflow: hidden; }
.pg-table { width: 523px; flex: none; }
.grow { display: grid; grid-template-columns: 21px 9px 392px 101px; height: 19px; box-sizing: border-box; border-bottom: 1px solid #b0b6bc; background: #ffffe8; }
.grow > div { box-sizing: border-box; border-right: 1px solid #b0b6bc; white-space: nowrap; line-height: 21px; }
.grow.ghead { height: 23px; background: linear-gradient(#fff, #efefef); }
.grow.ghead > div { line-height: 22px; text-align: center; }
.gv-h { background: linear-gradient(#fcd89a, #f4c468); color: #7a0060; font-size: 13px; }
.gno { background: linear-gradient(90deg, #fff, #eee); text-align: center; font-size: 11px; }
.rootrow .gno { background: #fed28c; color: #800060; }
.rootrow .gval { background: #deedfd; }
.gname { position: relative; }
.root { padding-left: 21px; color: #8c8c8c; }
.root::before {
  content: "−"; position: absolute; left: 4px; top: 3px; width: 11px; height: 11px; line-height: 9px; text-align: center; color: #222;
  border: 1px solid #aaa; background: linear-gradient(#fff, #ddd); box-sizing: border-box;
}
.leaf { padding-left: 30px; }
.leaf::before { content: ""; position: absolute; left: 10px; top: -1px; bottom: -1px; width: 1px; background: #9aa; }
.leaf::after { content: ""; position: absolute; left: 10px; top: 9px; width: 16px; height: 1px; background: #9aa; }
.gval { background: #fff; padding-left: 2px; overflow: hidden; }
.gval.num { font-size: 11px; }
.blue { color: #0000f0; }
.faded .gname, .faded .gval { color: #929292; }
.gvs { flex: 1; }
.gvs .thumb { top: 19px; height: 70px; }
.hint { margin: 7px 0 0 0; }
.dlg-btns { position: absolute; left: 378px; top: 377px; display: flex; gap: 15px; }
.dlg-btns button {
  width: 72px; height: 24px; padding: 0; font: inherit; color: #333; border: 1px solid #a8bcd0; border-radius: 3px;
  background: linear-gradient(#dfe8f3, #d4e0ee);
}
.dlg-btns .ok { border-color: #fff; padding: 3px; }
.dlg-btns .ok span { display: block; height: 100%; line-height: 16px; border: 1px dotted #222; box-sizing: border-box; }

.meter {
  position: absolute; left: 693px; top: -4px; width: 53px; height: 14px; background: #384656; border-radius: 0 0 4px 4px; border: 1px solid #26303c; box-sizing: border-box;
}
.meter i { position: absolute; left: 7px; top: 5px; width: 41px; height: 5px; background: repeating-linear-gradient(90deg, #8cd27a 0 1px, transparent 1px 2px); }
.marks { position: absolute; inset: 0; width: 100%; height: 100%; pointer-events: none; }
.note {
  position: absolute; left: 52px; top: 350px; white-space: nowrap;
  font: 300 40px/41px "Liberation Serif", "Noto Sans CJK SC", serif;
  color: #ee1010;
}
</style>
